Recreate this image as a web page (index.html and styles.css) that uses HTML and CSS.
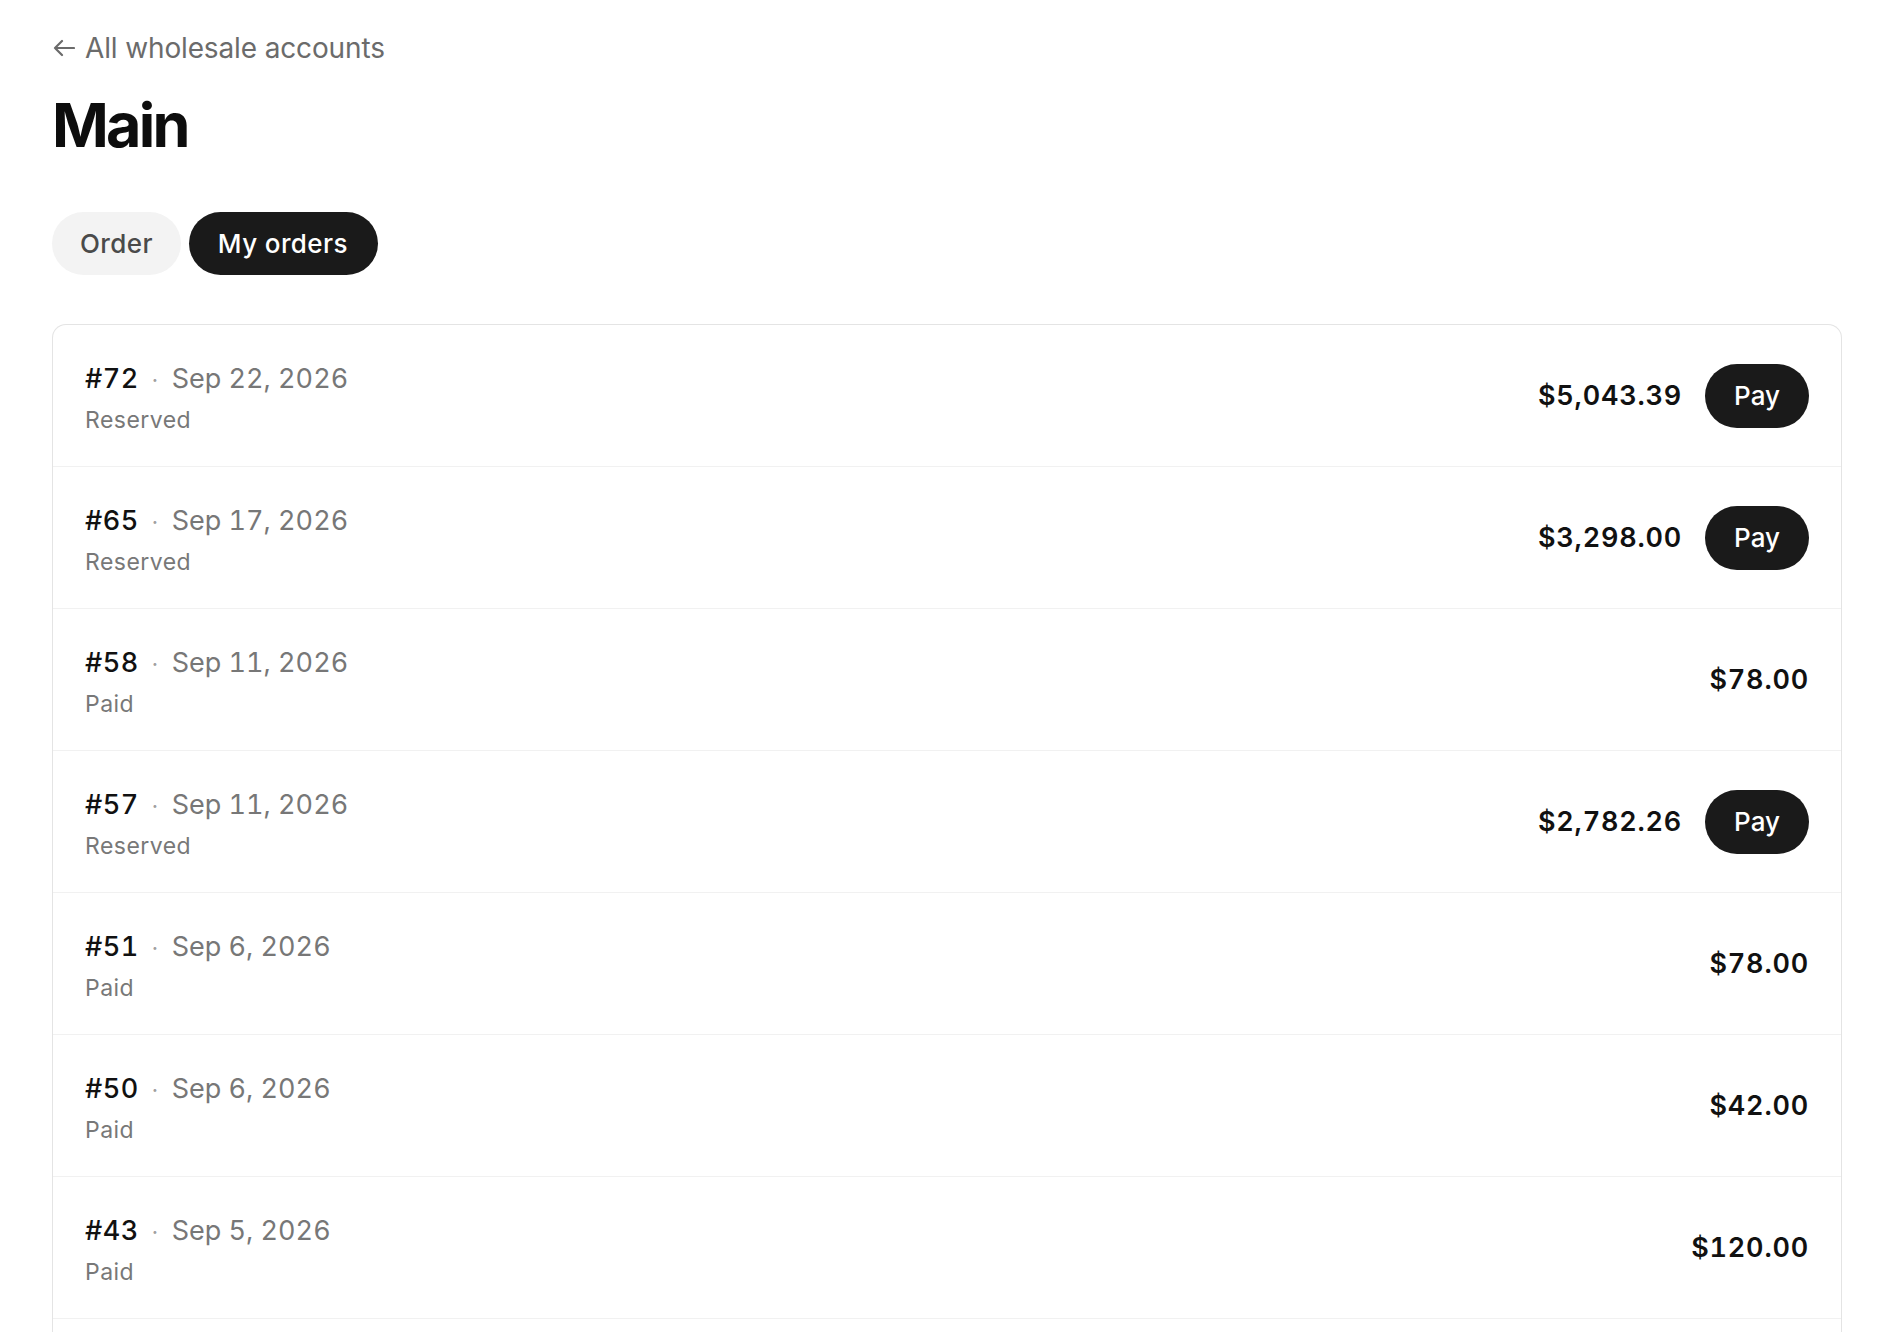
FILE: index.html
```html
<!DOCTYPE html>
<html lang="en">
<head>
<meta charset="utf-8">
<title>Main – My orders</title>
<link rel="stylesheet" href="styles.css">
</head>
<body>
<div class="page">
  <a class="back" href="#">
    <svg class="back-icon" width="22" height="18" viewBox="0 0 22 18" aria-hidden="true">
      <path d="M21 9H2M9 2L2 9l7 7" fill="none" stroke="currentColor" stroke-width="2.2" stroke-linecap="round" stroke-linejoin="round"/>
    </svg>
    <span>All wholesale accounts</span>
  </a>
  <h1 class="title">Main</h1>
  <div class="tabs">
    <button class="tab">Order</button>
    <button class="tab tab-active">My orders</button>
  </div>
  <div class="card">
    <div class="row">
      <div class="info">
        <div class="line"><span class="num">#72</span><span class="dot">·</span><span class="date">Sep 22, 2026</span></div>
        <div class="status">Reserved</div>
      </div>
      <div class="right"><span class="amount">$5,043.39</span><button class="pay">Pay</button></div>
    </div>
    <div class="row">
      <div class="info">
        <div class="line"><span class="num">#65</span><span class="dot">·</span><span class="date">Sep 17, 2026</span></div>
        <div class="status">Reserved</div>
      </div>
      <div class="right"><span class="amount">$3,298.00</span><button class="pay">Pay</button></div>
    </div>
    <div class="row">
      <div class="info">
        <div class="line"><span class="num">#58</span><span class="dot">·</span><span class="date">Sep 11, 2026</span></div>
        <div class="status">Paid</div>
      </div>
      <div class="right"><span class="amount">$78.00</span></div>
    </div>
    <div class="row">
      <div class="info">
        <div class="line"><span class="num">#57</span><span class="dot">·</span><span class="date">Sep 11, 2026</span></div>
        <div class="status">Reserved</div>
      </div>
      <div class="right"><span class="amount">$2,782.26</span><button class="pay">Pay</button></div>
    </div>
    <div class="row">
      <div class="info">
        <div class="line"><span class="num">#51</span><span class="dot">·</span><span class="date">Sep 6, 2026</span></div>
        <div class="status">Paid</div>
      </div>
      <div class="right"><span class="amount">$78.00</span></div>
    </div>
    <div class="row">
      <div class="info">
        <div class="line"><span class="num">#50</span><span class="dot">·</span><span class="date">Sep 6, 2026</span></div>
        <div class="status">Paid</div>
      </div>
      <div class="right"><span class="amount">$42.00</span></div>
    </div>
    <div class="row">
      <div class="info">
        <div class="line"><span class="num">#43</span><span class="dot">·</span><span class="date">Sep 5, 2026</span></div>
        <div class="status">Paid</div>
      </div>
      <div class="right"><span class="amount">$120.00</span></div>
    </div>
  </div>
</div>
</body>
</html>
```
FILE: styles.css
```css
* { box-sizing: border-box; }

html, body {
  margin: 0;
  background: #ffffff;
}

body {
  font-family: Inter, "Noto Sans", "Liberation Sans", sans-serif;
  color: #111111;
  -webkit-font-smoothing: antialiased;
}

.page {
  padding: 31px 42px 0 52px;
}

.back {
  display: flex;
  align-items: center;
  gap: 10px;
  width: max-content;
  font-size: 28px;
  line-height: 34px;
  color: #6b6b6b;
  text-decoration: none;
  letter-spacing: -0.005em;
}

.back-icon {
  flex: none;
  margin-left: 1px;
}

.title {
  margin: 23px 0 0;
  font-size: 61px;
  line-height: 75px;
  font-weight: 700;
  letter-spacing: -0.045em;
  color: #0d0d0d;
}

.tabs {
  display: flex;
  gap: 8px;
  margin-top: 49px;
}

.tab {
  height: 63px;
  padding: 0 28px;
  border: none;
  border-radius: 32px;
  background: #f3f3f3;
  color: #4a4a4a;
  font-family: inherit;
  font-size: 26px;
  font-weight: 500;
  letter-spacing: 0.015em;
  cursor: pointer;
}

.tab-active {
  background: #1a1a1a;
  color: #ffffff;
  padding: 0 30px 0 29px;
}

.card {
  margin-top: 49px;
  padding-bottom: 40px;
  border: 1.5px solid #e4e4e4;
  border-bottom: none;
  border-radius: 14px 14px 0 0;
  overflow: hidden;
}

.row {
  display: flex;
  align-items: center;
  justify-content: space-between;
  height: 142px;
  padding: 0 32px 0 32px;
  border-bottom: 1px solid #f1f1f1;
}

.row:first-child {
  height: 142px;
}

.info {
  display: flex;
  flex-direction: column;
  gap: 9px;
  padding-top: 4px;
}

.line {
  display: flex;
  align-items: baseline;
  font-size: 27px;
  line-height: 33px;
  letter-spacing: 0.02em;
  font-variant-numeric: tabular-nums;
}

.num {
  color: #111111;
  font-weight: 500;
}

.dot {
  color: #a0a0a0;
  margin: 0 13px;
  font-size: 22px;
}

.date {
  color: #777777;
  letter-spacing: 0;
}

.status {
  font-size: 23px;
  line-height: 28px;
  color: #787878;
  letter-spacing: 0.02em;
}

.right {
  display: flex;
  align-items: center;
  gap: 23px;
}

.amount {
  font-size: 27px;
  font-weight: 600;
  letter-spacing: 0.03em;
  font-variant-numeric: tabular-nums;
  color: #111111;
}

.pay {
  height: 64px;
  padding: 0 29px;
  border: none;
  border-radius: 32px;
  background: #1a1a1a;
  color: #ffffff;
  font-family: inherit;
  font-size: 26px;
  font-weight: 500;
  cursor: pointer;
}
```
